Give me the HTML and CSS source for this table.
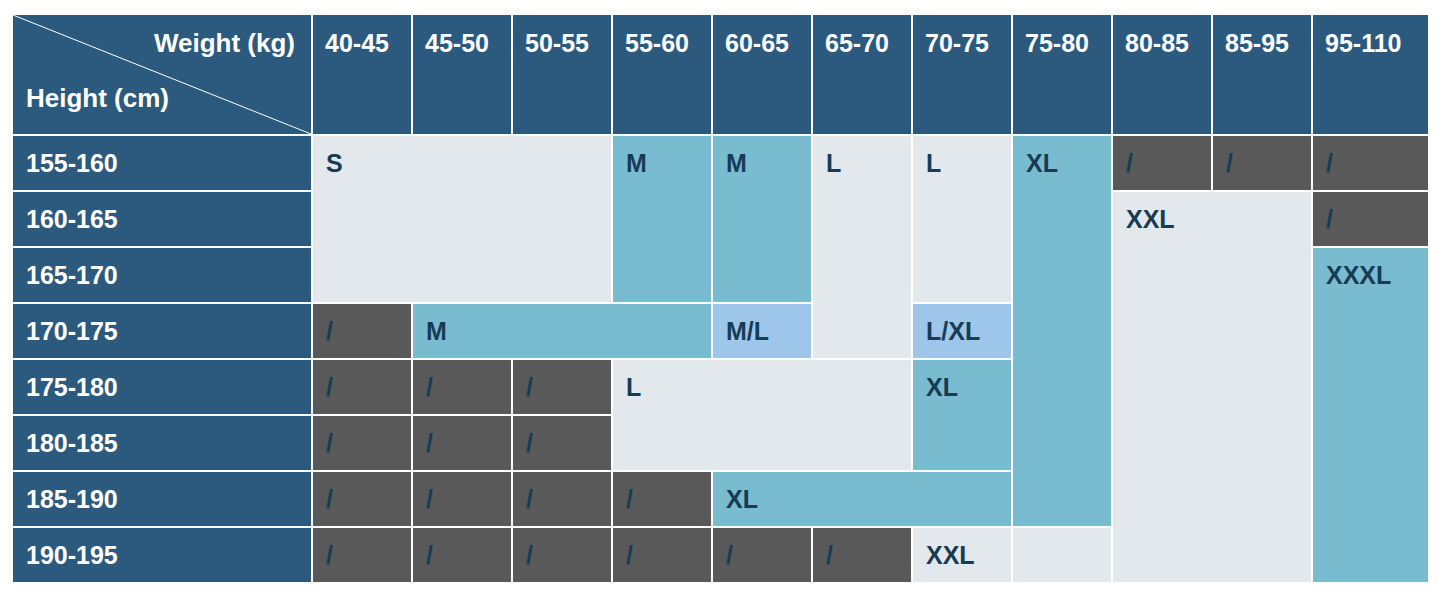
FILE: index.html
```html
<!DOCTYPE html>
<html lang="en">
<head>
<meta charset="utf-8">
<title>Size Chart</title>
<link rel="stylesheet" href="styles.css">
</head>
<body>
<div class="chart">
  <div class="corner">
    <svg class="diag" viewBox="0 0 298 119" preserveAspectRatio="none"><line x1="0" y1="0" x2="298" y2="119" stroke="#ffffff" stroke-width="1"/></svg>
    <span class="corner-w">Weight (kg)</span>
    <span class="corner-h">Height (cm)</span>
  </div>
  <div class="hd">40-45</div>
  <div class="hd">45-50</div>
  <div class="hd">50-55</div>
  <div class="hd">55-60</div>
  <div class="hd">60-65</div>
  <div class="hd">65-70</div>
  <div class="hd">70-75</div>
  <div class="hd">75-80</div>
  <div class="hd">80-85</div>
  <div class="hd">85-95</div>
  <div class="hd">95-110</div>

  <div class="rh r1">155-160</div>
  <div class="rh r2">160-165</div>
  <div class="rh r3">165-170</div>
  <div class="rh r4">170-175</div>
  <div class="rh r5">175-180</div>
  <div class="rh r6">180-185</div>
  <div class="rh r7">185-190</div>
  <div class="rh r8">190-195</div>

  <!-- row 155-160 -->
  <div class="c light" style="grid-area: 2 / 2 / 5 / 5">S</div>
  <div class="c teal" style="grid-area: 2 / 5 / 5 / 6">M</div>
  <div class="c teal" style="grid-area: 2 / 6 / 5 / 7">M</div>
  <div class="c light" style="grid-area: 2 / 7 / 6 / 8">L</div>
  <div class="c light" style="grid-area: 2 / 8 / 5 / 9">L</div>
  <div class="c teal" style="grid-area: 2 / 9 / 9 / 10">XL</div>
  <div class="c dark" style="grid-area: 2 / 10 / 3 / 11">/</div>
  <div class="c dark" style="grid-area: 2 / 11 / 3 / 12">/</div>
  <div class="c dark" style="grid-area: 2 / 12 / 3 / 13">/</div>

  <!-- row 160-165 -->
  <div class="c light" style="grid-area: 3 / 10 / 10 / 12">XXL</div>
  <div class="c dark" style="grid-area: 3 / 12 / 4 / 13">/</div>

  <!-- row 165-170 -->
  <div class="c teal" style="grid-area: 4 / 12 / 10 / 13">XXXL</div>

  <!-- row 170-175 -->
  <div class="c dark" style="grid-area: 5 / 2 / 6 / 3">/</div>
  <div class="c teal" style="grid-area: 5 / 3 / 6 / 6">M</div>
  <div class="c sky" style="grid-area: 5 / 6 / 6 / 7">M/L</div>
  <div class="c sky" style="grid-area: 5 / 8 / 6 / 9">L/XL</div>

  <!-- row 175-180 -->
  <div class="c dark" style="grid-area: 6 / 2 / 7 / 3">/</div>
  <div class="c dark" style="grid-area: 6 / 3 / 7 / 4">/</div>
  <div class="c dark" style="grid-area: 6 / 4 / 7 / 5">/</div>
  <div class="c light" style="grid-area: 6 / 5 / 8 / 8">L</div>
  <div class="c teal" style="grid-area: 6 / 8 / 8 / 9">XL</div>

  <!-- row 180-185 -->
  <div class="c dark" style="grid-area: 7 / 2 / 8 / 3">/</div>
  <div class="c dark" style="grid-area: 7 / 3 / 8 / 4">/</div>
  <div class="c dark" style="grid-area: 7 / 4 / 8 / 5">/</div>

  <!-- row 185-190 -->
  <div class="c dark" style="grid-area: 8 / 2 / 9 / 3">/</div>
  <div class="c dark" style="grid-area: 8 / 3 / 9 / 4">/</div>
  <div class="c dark" style="grid-area: 8 / 4 / 9 / 5">/</div>
  <div class="c dark" style="grid-area: 8 / 5 / 9 / 6">/</div>
  <div class="c teal" style="grid-area: 8 / 6 / 9 / 9">XL</div>

  <!-- row 190-195 -->
  <div class="c dark" style="grid-area: 9 / 2 / 10 / 3">/</div>
  <div class="c dark" style="grid-area: 9 / 3 / 10 / 4">/</div>
  <div class="c dark" style="grid-area: 9 / 4 / 10 / 5">/</div>
  <div class="c dark" style="grid-area: 9 / 5 / 10 / 6">/</div>
  <div class="c dark" style="grid-area: 9 / 6 / 10 / 7">/</div>
  <div class="c dark" style="grid-area: 9 / 7 / 10 / 8">/</div>
  <div class="c light" style="grid-area: 9 / 8 / 10 / 9">XXL</div>
  <div class="c light" style="grid-area: 9 / 9 / 10 / 10"></div>
</div>
</body>
</html>
```
FILE: styles.css
```css
html, body {
  margin: 0;
  padding: 0;
  background: #ffffff;
}

body {
  padding: 15px 0 0 13px;
  font-family: "Liberation Sans", Arial, Helvetica, sans-serif;
  font-weight: bold;
  font-size: 25px;
  line-height: 25px;
}

.chart {
  display: grid;
  grid-template-columns: 298px repeat(10, 98px) 115px;
  grid-template-rows: 119px repeat(8, 54px);
  gap: 2px;
  width: 1415px;
  background: #ffffff;
}

.corner {
  grid-area: 1 / 1 / 2 / 2;
  position: relative;
  background: #2c5a7f;
  color: #ffffff;
  display: flex;
  flex-direction: column;
  padding: 16px 16px 0 13px;
}

.diag {
  position: absolute;
  left: 0;
  top: 0;
  width: 100%;
  height: 100%;
}

.corner-w {
  align-self: flex-end;
  position: relative;
  font-size: 26px;
}

.corner-h {
  align-self: flex-start;
  margin-top: 30px;
  position: relative;
  font-size: 26px;
}

.hd {
  background: #2c5a7f;
  color: #ffffff;
  padding: 16px 0 0 12px;
}

.rh {
  grid-column: 1;
  background: #2c5a7f;
  color: #ffffff;
  padding: 15px 0 0 13px;
}

.r1 { grid-row: 2; }
.r2 { grid-row: 3; }
.r3 { grid-row: 4; }
.r4 { grid-row: 5; }
.r5 { grid-row: 6; }
.r6 { grid-row: 7; }
.r7 { grid-row: 8; }
.r8 { grid-row: 9; }

.c {
  color: #173c54;
  padding: 15px 0 0 13px;
}

.light { background: #e2e8eb; }
.teal { background: #79bbcf; }
.dark { background: #595959; }
.sky { background: #9dc6ea; }
```
